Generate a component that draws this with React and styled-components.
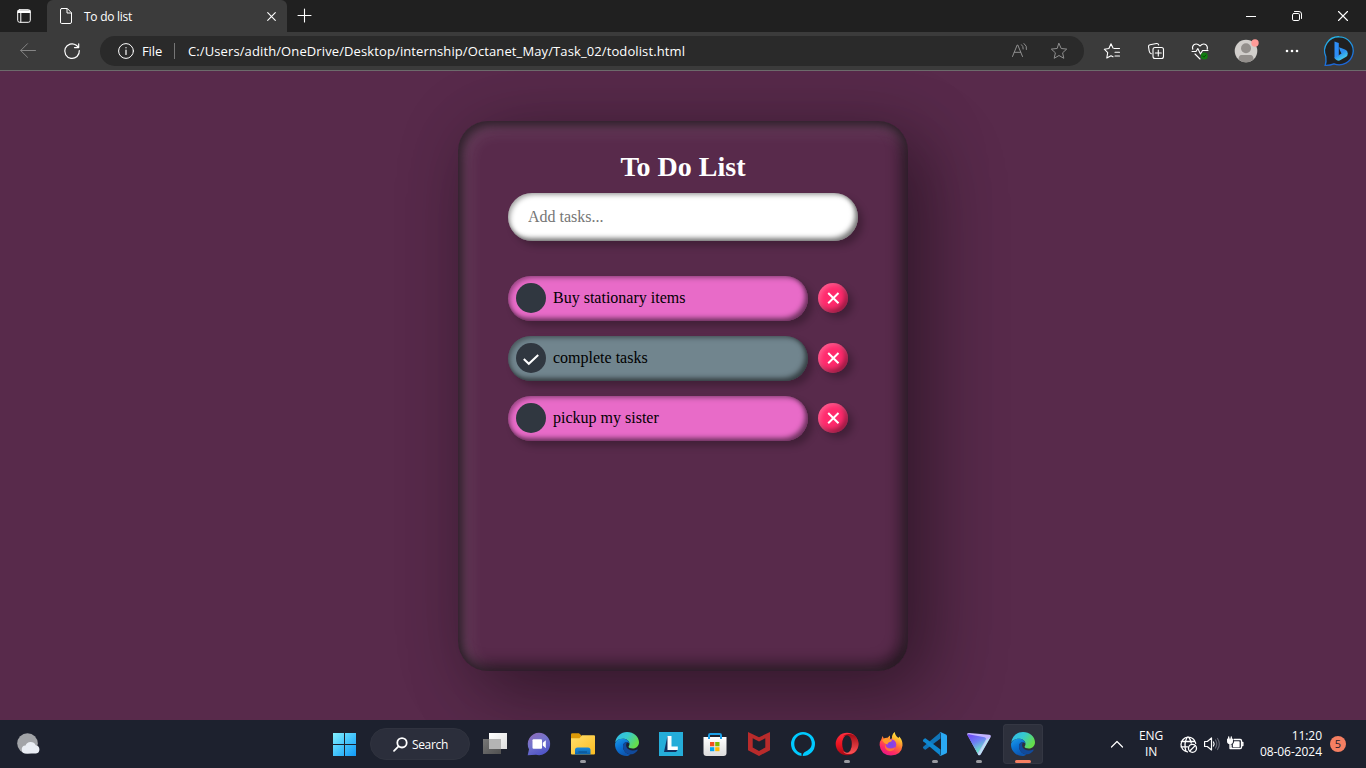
import React, { useId } from "react";
import styled, { createGlobalStyle } from "styled-components";

const GlobalStyle = createGlobalStyle`
  * { box-sizing: border-box; }
  html, body { margin: 0; padding: 0; background: #582a4b; overflow: hidden; }
  button, input { font: inherit; border: 0; padding: 0; background: none; color: inherit; }
  svg { display: block; flex: none; overflow: visible; }
  h1, ul { margin: 0; padding: 0; list-style: none; }
`;

const ui = `"Open Sans", "Noto Sans", sans-serif`;

const Screen = styled.div`
  width: 1366px;
  height: 768px;
  display: grid;
  grid-template-rows: 32px 39px 649px 48px;
  overflow: hidden;
  font-family: ${ui};
  color: #fff;
`;

const TabStrip = styled.header`
  display: flex;
  background: #202020;
`;
const Slot = styled.button`
  width: ${(p) => p.$w}px;
  height: 100%;
  display: grid;
  place-items: center;
  flex: none;
`;
const Tab = styled.div`
  width: 240px;
  height: 32px;
  display: flex;
  align-items: center;
  padding: 0 10px 0 12px;
  background: #3b3b3b;
  border-radius: 6px 6px 0 0;
  font-size: 12px;
`;
const TabTitle = styled.span`
  flex: 1;
  padding-left: 11px;
  letter-spacing: -0.27px;
`;
const Spacer = styled.div`
  flex: 1;
`;

const Toolbar = styled.nav`
  display: flex;
  align-items: center;
  background: #3b3b3b;
  border-bottom: 1px solid #6c6a6b;
  padding: 0 11px 0 6px;
`;
const AddressBar = styled.div`
  width: 984px;
  height: 30px;
  margin: 0 6px;
  display: flex;
  align-items: center;
  background: #2a2a2a;
  border-radius: 15px;
  padding: 0 17px 0 18px;
  font-size: 13px;
`;
const Scheme = styled.span`
  width: 33px;
  margin-left: 8px;
  border-right: 1px solid #767676;
  line-height: 16px;
  letter-spacing: -0.1px;
`;
const Url = styled.span`
  margin-left: 13px;
  flex: 1;
  white-space: nowrap;
  letter-spacing: 0.11px;
`;
const AddressIcons = styled.span`
  display: flex;
  gap: 22px;
`;

const Page = styled.main`
  background: #582a4b;
  display: flex;
  justify-content: center;
  align-items: flex-start;
  padding-top: 50px;
  overflow: hidden;
  font-family: "Liberation Serif", serif;
`;
const Card = styled.section`
  width: 450px;
  height: 550px;
  padding: 30px 50px;
  border-radius: 30px;
  background: #582a4b;
  box-shadow: 25px 25px 75px rgba(0, 0, 0, 0.25),
    10px 10px 70px rgba(0, 0, 0, 0.25),
    inset 5px 5px 10px rgba(0, 0, 0, 0.5),
    inset 5px 5px 20px rgba(255, 255, 255, 0.2),
    inset -5px -5px 15px rgba(0, 0, 0, 0.75);
`;
const Title = styled.h1`
  font-size: 28px;
  line-height: 32px;
  text-align: center;
  margin-bottom: 10px;
`;
const TaskInput = styled.input`
  display: block;
  width: 350px;
  height: 48px;
  padding: 0 20px;
  border-radius: 24px;
  background: #fff;
  font-size: 16px;
  color: #000;
  outline: none;
  box-shadow: 5px 5px 7px rgba(0, 0, 0, 0.25),
    inset 2px 2px 5px rgba(0, 0, 0, 0.35),
    inset -3px -3px 5px rgba(0, 0, 0, 0.5);
  &::placeholder { color: #757575; }
`;
const TaskList = styled.ul`
  margin-top: 35px;
  display: grid;
  gap: 15px;
`;
const TaskRow = styled.li`
  display: flex;
  align-items: center;
  gap: 10px;
`;
const TaskPill = styled.div`
  width: 300px;
  height: 45px;
  display: flex;
  align-items: center;
  gap: 7px;
  padding: 0 8px 1px;
  border-radius: 22.5px;
  background: ${(p) => (p.$done ? "#71858e" : "#e86bc8")};
  color: #000;
  font-size: 16px;
  box-shadow: 5px 5px 7px rgba(0, 0, 0, 0.25),
    inset 2px 2px 5px rgba(0, 0, 0, 0.35),
    inset -3px -3px 5px rgba(0, 0, 0, 0.5);
`;
const Check = styled.span`
  width: 30px;
  height: 30px;
  display: grid;
  place-items: center;
  border-radius: 50%;
  background: #303740;
`;
const Delete = styled.button`
  width: 30px;
  height: 30px;
  margin-top: -1px;
  display: grid;
  place-items: center;
  border-radius: 50%;
  background: #ff2a6d;
  box-shadow: 5px 5px 7px rgba(0, 0, 0, 0.25),
    inset 2px 2px 5px rgba(255, 255, 255, 0.25),
    inset -3px -3px 5px rgba(0, 0, 0, 0.4);
`;

const Taskbar = styled.footer`
  display: grid;
  grid-template-columns: 322px 723px 321px;
  background: #1d212e;
`;
const Weather = styled.div`
  display: flex;
  align-items: center;
  padding-left: 16px;
`;
const Apps = styled.div`
  display: flex;
  align-items: center;
`;
const Search = styled.div`
  width: 100px;
  height: 32px;
  margin: 0 3px 0 4px;
  padding-left: 22px;
  display: flex;
  align-items: center;
  gap: 4px;
  border-radius: 16px;
  background: #2b2e3b;
  border: 1px solid #30333f;
  font-size: 12px;
  letter-spacing: -0.35px;
`;
const AppSlot = styled.div`
  width: 44px;
  height: 48px;
  display: grid;
  place-items: center;
`;
const AppTile = styled.div`
  width: 40px;
  height: 40px;
  display: flex;
  flex-direction: column;
  align-items: center;
  padding-top: 8px;
  border-radius: 4px;
  background: ${(p) => (p.$active ? "#2d303c" : "transparent")};
  box-shadow: ${(p) => (p.$active ? "inset 0 0 0 1px #343743" : "none")};
`;
const Indicator = styled.i`
  margin-top: 4px;
  width: ${(p) => (p.$active ? 16 : 6)}px;
  height: 3px;
  border-radius: 1.5px;
  background: ${(p) => (p.$active ? "#f57f62" : "#9a9ba1")};
`;
const Tray = styled.div`
  display: flex;
  align-items: center;
  padding-left: 65px;
  font-size: 12px;
  line-height: 16px;
`;
const Language = styled.div`
  width: 30px;
  margin-left: 12px;
  text-align: center;
  letter-spacing: -0.2px;
`;
const TrayIcons = styled.div`
  display: flex;
  gap: 6px;
  margin-left: 14px;
`;
const Clock = styled.div`
  width: 76px;
  margin-left: 2px;
  text-align: right;
  white-space: nowrap;
  letter-spacing: -0.05px;
`;
const Badge = styled.div`
  width: 16px;
  height: 16px;
  margin-left: 8px;
  border-radius: 50%;
  background: #f57f62;
  color: #1d212e;
  font-size: 11px;
  text-align: center;
`;

/* Thin outline icon drawn in its own pixel grid. */
const Line = ({ w = 16, h = w, c = "#fff", sw = 1, children }) => (
  <svg width={w} height={h} viewBox={`0 0 ${w} ${h}`} fill="none" stroke={c} strokeWidth={sw} strokeLinecap="round" strokeLinejoin="round">
    {children}
  </svg>
);
const Art = ({ children }) => (
  <svg width="24" height="24" viewBox="0 0 24 24">{children}</svg>
);
const Grad = ({ id, stops, x1 = 0, y1 = 0, x2 = 1, y2 = 1 }) => (
  <linearGradient id={id} x1={x1} y1={y1} x2={x2} y2={y2}>
    {stops.map((s, i) => <stop key={i} offset={i / (stops.length - 1)} stopColor={s} />)}
  </linearGradient>
);

const Star = "M8 .5 10.2 5.500 15.700 6.100 11.600 9.800 12.800 15.300 8 12.500 3.200 15.300 4.400 9.800 .3 6.100 5.800 5.500Z";

const EdgeIcon = () => {
  const k = useId();
  return (
    <Art>
      <defs>
        <Grad id={k + "a"} stops={["#2fb8ed", "#36c9cf", "#65dd4b"]} y2={0.5} />
        <Grad id={k + "b"} stops={["#1d9ce8", "#0a73d4", "#0d55ae"]} x2={0.5} />
      </defs>
      <path fill={`url(#${k}a)`} d="M.2 10.5C1 4.5 6 0 12 0c6.6 0 12 4.6 12 10.2 0 3.7-2.7 6.3-6.2 6.3-2.6 0-4.2-.8-4.2-1.7 0-.6.9-1 .9-2.8C14.500 9 11.500 6.800 8 6.800c-3.600 0-6.500 1.500-7.800 3.700Z" />
      <path fill={`url(#${k}b)`} d="M.1 11.500C1 8.800 3.700 6.800 7.600 6.800c3.500 0 6.300 1.700 6.800 4.600-.9-1-2-1.400-3.200-1.200-2.300.4-3.400 2.300-3.200 4.700.3 4 3.700 7.300 7.600 7.600C14.500 23.400 13.200 24 11.500 24 5 24-.6 18.500.1 11.500Z" />
      <path fill="#114a9b" d="M11.200 10.200c-2.300.4-3.400 2.300-3.200 4.700.4 5.200 5.500 8.600 10.100 7 2-.8 3.800-2.500 4.600-4 .2-.4-.1-.6-.5-.4-3.800 2-9.500 1-10.700-2.500-.7-2-.4-3.600.9-4.800Z" />
    </Art>
  );
};

const StartIcon = () => {
  const k = useId();
  return (
    <svg width="23" height="23" viewBox="0 0 23 23">
      <defs><linearGradient id={k} gradientUnits="userSpaceOnUse" x1="0" y1="0" x2="23" y2="23"><stop stopColor="#83f1ff" /><stop offset=".55" stopColor="#3fc0fb" /><stop offset="1" stopColor="#1198f5" /></linearGradient></defs>
      <path fill={`url(#${k})`} d="M0 0h11v11H0zM12 0h11v11H12zM0 12h11v11H0zM12 12h11v11H12z" />
    </svg>
  );
};
const TaskViewIcon = () => {
  const k = useId();
  return (
    <Art>
      <defs><Grad id={k} stops={["#ffffff", "#dedede"]} /><Grad id={k + "g"} stops={["#777", "#505050"]} /></defs>
      <path fill={`url(#${k}g)`} d="M0 7h18v15H0z" />
      <path fill={`url(#${k})`} d="M6 1h18v16H6z" />
      <path fill="#b4b4b4" d="M6 7h12v10H6z" />
    </Art>
  );
};
const ChatIcon = () => {
  const k = useId();
  return (
    <Art>
      <defs><Grad id={k} stops={["#9269b5", "#7474cc", "#5156c8"]} x2={0.5} /></defs>
      <path fill={`url(#${k})`} d="M12 .8a11.200 11.200 0 1 1-3 22L.7 23.200 2 17.200A11.200 11.200 0 0 1 12 .8Z" />
      <rect x="5.500" y="7.200" width="9.500" height="9.500" rx="1" fill="#fff" />
      <path fill="#fff" d="m15.800 10.800 3-2.600v8l-3-2.600Z" />
    </Art>
  );
};
const ExplorerIcon = () => {
  const k = useId();
  return (
    <Art>
      <defs><Grad id={k} stops={["#ffdf6d", "#fcbc20"]} /><Grad id={k + "b"} stops={["#1a8ada", "#0b63ae"]} x2={0} /></defs>
      <path fill="#dd9a08" d="M0 2.500Q0 1.200 1.300 1.200H8L10.500 3.500V7H0Z" />
      <path fill={`url(#${k})`} d="M0 6.200h8.500L11 3.300h12q1 0 1 1v17.200q0 1-1 1H1q-1 0-1-1Z" />
      <path fill={`url(#${k}b)`} d="M4 22.500V18q0-2.500 2.500-2.500h10.500q2.500 0 2.500 2.500v4.500Z" />
      <path fill="#084b86" d="M7.500 19.500h8.500v1H7.500z" />
    </Art>
  );
};
const LIcon = () => (
  <Art>
    <path fill="#25add9" d="M0 0h24v24H0z" />
    <path fill="#12305f" d="M8.500 4 5 20h12l2-2.500-8-2Z" />
    <path fill="#fff" d="M8.500 4h4v10.500h6.300v3.500H8.500Z" />
  </Art>
);
const StoreIcon = () => {
  const k = useId();
  return (
    <Art>
      <defs><Grad id={k} stops={["#fff", "#dcdcdc"]} x2={0} /></defs>
      <path fill={`url(#${k})`} d="M.5 5h23v16q0 3-3 3h-17q-3 0-3-3Z" />
      <path d="M6 7V3.300Q6 2 7.300 2h9.400q1.300 0 1.300 1.300V7" fill="none" stroke="#1b9fe8" strokeWidth="2" />
      <path fill="#f25022" d="M7 10h4.300v4.300H7z" /><path fill="#7fba00" d="M12.200 10h4.300v4.300h-4.300z" />
      <path fill="#00a4ef" d="M7 15.200h4.300v4H7z" /><path fill="#ffb900" d="M12.200 15.200h4.300v4h-4.300z" />
    </Art>
  );
};
const McAfeeIcon = () => (
  <Art>
    <path fill="#b92b2b" d="m1 0 11 5.300L23 0v18.200L12 24 1 18.200Z" />
    <path fill="#1d212e" d="m5.700 6.300 6.300 3.300 6.300-3.300v9.200L12 19l-6.300-3.500Z" />
  </Art>
);
const AlexaIcon = () => (
  <Art>
    <path fill="#00caff" fillRule="evenodd" d="M12 0a12 12 0 1 1 0 24A12 12 0 0 1 12 0Zm0 2.600c-5 0-8.700 4-8.700 9.200 0 4.400 2.500 8.400 7.200 9.500V24h1.200c.1-2.200.8-3 2.600-4.200 3.800-1.800 6.400-4.200 6.400-8.200 0-5.200-3.800-9-8.700-9Z" />
  </Art>
);
const OperaIcon = () => {
  const k = useId();
  return (
    <Art>
      <defs><Grad id={k} stops={["#ff3040", "#ed1421", "#a50814"]} x2={0} /><Grad id={k + "b"} stops={["#a20a13", "#ff5558"]} x2={0} /></defs>
      <circle cx="12" cy="12" r="11.300" fill={`url(#${k})`} />
      <path fill={`url(#${k}b)`} d="M8 4.500C10 1.700 15 1 19 3.200c6 4.500 6 13 0 17.600-4 2.200-9 1.500-11-1.300 5 1.500 9-2 9-7.500S13 3 8 4.500Z" />
      <ellipse cx="12" cy="12" rx="4.800" ry="8.700" fill="#1d212e" />
    </Art>
  );
};
const FirefoxIcon = () => {
  const k = useId();
  return (
    <Art>
      <defs>
        <Grad id={k} stops={["#fff34f", "#ffbd2f", "#ff6c36", "#ff2c63", "#e31587"]} x1={0.8} x2={0.25} />
        <radialGradient id={k + "p"}><stop stopColor="#7049ef" /><stop offset="1" stopColor="#a83bd4" /></radialGradient>
      </defs>
      <path fill={`url(#${k})`} d="M3.500 4 4.800 6.500Q6.500 5.500 8.500 5.700L11 3.500 11 7 13 6.500Q12.500 2.500 15.800 0 16 3.500 19.500 6L20.300 4.500Q23.800 8.500 23.500 13.500 22.500 23.200 12 23.500 1.500 23 .6 13 .7 9 2.500 7Z" />
      <circle cx="12" cy="12.500" r="5.300" fill={`url(#${k}p)`} />
      <path fill="#ff9b29" d="M3 8q4-3 7.500-.5L13 8.200q0 1.500-3 2-1.700.7-1.500 2.300Q5.500 12 3 8Z" />
      <path fill="#ff7138" d="M6 12q1 4.500 5.500 4.500 3 0 4.500-1.500-.5 4-5 4.200Q5 18.500 6 12Z" />
    </Art>
  );
};
const CodeIcon = () => (
  <Art>
    <path fill="#1075b9" d="M17.500.2v6.200L2.800 17.500Q2 18 1.300 17.300L.2 16.200q-.6-.7 0-1.400Z" />
    <path fill="#0f87cf" d="M17.500 23.800v-6.200L2.800 6.500Q2 6 1.300 6.700L.2 7.800q-.6.7 0 1.400Z" />
    <path fill="#2aa8f2" d="M17.500 0 23 2.500q1 .5 1 1.500v16q0 1-1 1.500L17.500 24q-1 .2-1.700-.6 2.200 1 2.200-1.400V2q0-2.400-2.200-1.400.7-.8 1.700-.6Z" />
  </Art>
);
const ProtonIcon = () => {
  const k = useId();
  return (
    <Art>
      <defs><Grad id={k} stops={["#7341f5", "#6d7ff3", "#69edc5"]} x2={0.5} /></defs>
      <path fill="#c2b4ff" d="M0 2Q.2 1 2 1l20.500 1.700q2 .3 1.300 2L14 22q-1 2-2.700 1Z" />
      <path fill={`url(#${k})`} d="M.3 3Q1 1.600 3 2.500l14.500 2.700q2.200.7 1.200 2.600l-8 13.700Z" />
      <path fill="#b7f4ee" d="m23.500 5-10 17.200q-1.300 2-2.600.3l8.400-14.200Z" opacity=".75" />
    </Art>
  );
};

const apps = [
  { name: "taskview", icon: TaskViewIcon },
  { name: "chat", icon: ChatIcon },
  { name: "explorer", icon: ExplorerIcon, open: true },
  { name: "edge", icon: EdgeIcon },
  { name: "l", icon: LIcon },
  { name: "store", icon: StoreIcon },
  { name: "mcafee", icon: McAfeeIcon },
  { name: "alexa", icon: AlexaIcon },
  { name: "opera", icon: OperaIcon, open: true },
  { name: "firefox", icon: FirefoxIcon },
  { name: "code", icon: CodeIcon, open: true },
  { name: "proton", icon: ProtonIcon, open: true },
  { name: "edge-active", icon: EdgeIcon, open: true, active: true },
];

const tasks = [
  { text: "Buy stationary items", done: false },
  { text: "complete tasks", done: true },
  { text: "pickup my sister", done: false },
];

const BingIcon = () => {
  const k = useId();
  return (
    <svg width="32" height="32" viewBox="0 0 32 32">
      <defs><Grad id={k} stops={["#25bce9", "#1c66d8"]} x2={0.3} /><Grad id={k + "b"} stops={["#3299f5", "#2a8df0", "#4bd6e8"]} x2={0.6} /></defs>
      <path fill="#202020" stroke={`url(#${k})`} strokeWidth="1.300" d="M16.500 1.800a14 14 0 1 1-5.500 27Q6.500 30.600 2.200 30.300 3.500 27 2.800 21.500A14 14 0 0 1 16.500 1.800Z" />
      <path fill="#2e8df5" d="m11.500 6.500 4.300 1.600V20.500L11.500 23.500Z" />
      <path fill={`url(#${k}b)`} d="m11.500 22.500 5-2.700 2-1.300-1.500-3-1-3.200 6 2.200q2.800 1.100 2.800 4 0 2.300-2 3.500L17.500 25q-2 1.300-4 0-1.700-1-2-2.500Z" />
    </svg>
  );
};

export default function App() {
  return (
    <Screen>
      <GlobalStyle />
      <TabStrip>
        <Slot $w={47}>
          <Line w={14}>
            <rect x=".7" y=".7" width="12.600" height="12.600" rx="2" />
            <path d="M1 2h12M1 3.200h12" strokeWidth="1.400" /><path d="M3.800 4v9" />
          </Line>
        </Slot>
        <Tab>
          <Line w={14} h={16}>
            <path d="M2.500.5h5.800l4.200 4.300v9.200q0 1.500-1.500 1.500H2.500Q1.500 15.500 1.500 14V2Q1.500.5 2.500.5ZM8 .8V5h4.300" />
          </Line>
          <TabTitle>To do list</TabTitle>
          <Line w={11} sw={1.1}><path d="m1.700 1.700 7.600 7.600M9.300 1.700 1.700 9.300" /></Line>
        </Tab>
        <Slot $w={35}><Line w={14} sw={1.1}><path d="M6.500 0v13M0 6.500h13" /></Line></Slot>
        <Spacer />
        <Slot $w={46}><Line w={10}><path d="M0 5.500h10" strokeLinecap="butt" /></Line></Slot>
        <Slot $w={46}>
          <Line w={10}><rect x=".5" y="2.500" width="7" height="7" rx="1.300" /><path d="M2.500.5H7Q9.500.5 9.500 3v4.500" /></Line>
        </Slot>
        <Slot $w={46}><Line w={10} sw={1.1}><path d="m.5.5 9 9M9.500.5l-9 9" /></Line></Slot>
      </TabStrip>

      <Toolbar>
        <Slot $w={44}><Line w={16} c="#858585"><path d="M15.500 7.500H.7M7.500.7.7 7.500l6.800 6.800" /></Line></Slot>
        <Slot $w={44}><Line w={16} sw={1.2}><path d="M15.300 7.500A7.300 7.300 0 1 1 12.300 2.200L14.500 4.300M14.700.8v3.800H10.500" /></Line></Slot>
        <AddressBar>
          <Line w={16}><circle cx="8" cy="8" r="7.400" /><path d="M8 7v4.500M8 4.500v.3" strokeWidth="1.200" c="#ccc" /></Line>
          <Scheme>File</Scheme>
          <Url>C:/Users/adith/OneDrive/Desktop/internship/Octanet_May/Task_02/todolist.html</Url>
          <AddressIcons>
            <Line w={18} h={16} c="#8f8f8f"><path d="m1.500 13.500 4.700-11.500h.600l4.700 11.500M3.300 9.300h6.400M10.500 1.700q2 1.500 1.700 4.300M13 .5q3.300 2.300 2.500 6" sw={1.1} /></Line>
            <Line w={16} c="#8f8f8f"><path d={Star} /></Line>
          </AddressIcons>
        </AddressBar>
        <Slot $w={44}>
          <Line w={16} sw={1.1}><path d="M10 5.500h5.500M11 9.300h4.500M11 13h4.500M9 5 7 .8 4.900 5.500.3 6.200l3.400 3.400L2.800 15 7 12.700l2 1.100" /></Line>
        </Slot>
        <Slot $w={44}>
          <Line w={16} sw={1.1}>
            <path d="M3.300 10.800Q1.500 10 1.200 8L.500 3.700Q.3 2 2 1.700L8.500.5q1.700-.2 2.200 1.500" />
            <rect x="5" y="4.500" width="10.500" height="11" rx="2" /><path d="M10.300 7v6M7.300 10h6" />
          </Line>
        </Slot>
        <Slot $w={44}>
          <Line w={18} h={17} sw={1.1}>
            <path d="M1.800 6.300Q.8 3.500 2.800 1.800 6-.2 9 3q3-3.200 6-1.200 2 1.700 1.200 4.500M1 8.500h4l1.800-3 2.700 5.500 2-3.500h5.500M4 11l5 5" />
            <circle cx="13.300" cy="13" r="3.500" fill="#107c10" stroke="none" />
            <path d="m11.700 13 1.200 1.200 2-2.200" stroke="#063d06" strokeWidth=".8" />
          </Line>
        </Slot>
        <Slot $w={48}>
          <svg width="24" height="24" viewBox="0 0 24 24">
            <circle cx="12" cy="12" r="11.300" fill="#d1cecb" />
            <circle cx="12" cy="9.300" r="5" fill="#938f8c" />
            <path fill="#938f8c" d="M4.500 20.400q0-4.500 3-4.500h9q3 0 3 4.500-3.500 3-7.500 3t-7.500-3Z" />
            <circle cx="21" cy="4" r="3.700" fill="#ff9b98" />
          </svg>
        </Slot>
        <Slot $w={44}>
          <svg width="14" height="4" viewBox="0 0 14 4" fill="#fff"><circle cx="2" cy="2" r="1.300" /><circle cx="7" cy="2" r="1.300" /><circle cx="12" cy="2" r="1.300" /></svg>
        </Slot>
        <Spacer />
        <BingIcon />
      </Toolbar>

      <Page>
        <Card>
          <Title>To Do List</Title>
          <TaskInput placeholder="Add tasks..." />
          <TaskList>
            {tasks.map((t) => (
              <TaskRow key={t.text}>
                <TaskPill $done={t.done}>
                  <Check>
                    {t.done && <Line w={16} sw={2}><path d="m.8 9 5 4.800L15.200 5" strokeLinecap="butt" strokeLinejoin="miter" /></Line>}
                  </Check>
                  {t.text}
                </TaskPill>
                <Delete><Line w={12} sw={2}><path d="m1.200 1 10.300 10.300M11.500 1 1.200 11.300" strokeLinecap="butt" /></Line></Delete>
              </TaskRow>
            ))}
          </TaskList>
        </Card>
      </Page>

      <Taskbar>
        <Weather>
          <svg width="24" height="24" viewBox="0 0 24 24">
            <circle cx="11.500" cy="11.500" r="10.300" fill="#a2a4a8" />
            <path fill="#e9edf4" d="M10 21.500a4 4 0 0 1-.5-8 5.500 5.500 0 0 1 10.200-.3A4.200 4.200 0 0 1 20 21.500Z" />
          </svg>
        </Weather>
        <Apps>
          <AppSlot><StartIcon /></AppSlot>
          <Search>
            <Line w={15} sw={1.800}><circle cx="9" cy="5.800" r="4.700" /><path d="M5.500 9.300 1 13.800" /></Line>
            Search
          </Search>
          {apps.map(({ name, icon: Icon, open, active }) => (
            <AppSlot key={name}>
              <AppTile $active={active}>
                <Icon />
                {open && <Indicator $active={active} />}
              </AppTile>
            </AppSlot>
          ))}
        </Apps>
        <Tray>
          <Line w={14} h={8} sw={1.2}><path d="m1.500 7 5.500-5.500L12.500 7" /></Line>
          <Language>ENG IN</Language>
          <TrayIcons>
            <Line w={18} h={17} sw={1.3}>
              <path d="M7.500 15.900A7.400 7.400 0 1 1 15.700 7.300M6 15.300Q3.500 8 7 1.500q1-1 2 0Q10.800 4 11.200 7M1.300 5.500h13.400M1 10.800h6.500" />
              <circle cx="12.500" cy="12.300" r="4" /><path d="m9.800 15 5.400-5.400" />
            </Line>
            <Line w={16} h={16} sw={1.2}>
              <path d="M.6 5.500h2.700L7.500 2v12L3.300 10.500H.6ZM9.500 6q1.300 2 0 4" />
              <path d="M11.500 4q2.600 4 0 8M13.500 2.500q3.700 5.500 0 11" stroke="#646672" />
            </Line>
            <Line w={18} h={16} sw={1.3}>
              <path d="M8 3.500h6.200q1.300 0 1.300 1.300v6.400q0 1.300-1.300 1.300H6.500Q5 12.500 5 11V9M15.900 6.500h1v3h-1" />
              <path d="M8.500 6h4.500v4.500H7.500V8.300L8.500 7Z" fill="#fff" />
              <path d="M1.700 3.200h4.600v2.300Q6.300 7.500 4 7.500T1.700 5.500Z" fill="#fff" /><path d="M2.700 1v2M5.300 1v2M4 7.500v5h2" />
            </Line>
          </TrayIcons>
          <Clock>11:20<br />08-06-2024</Clock>
          <Badge>5</Badge>
        </Tray>
      </Taskbar>
    </Screen>
  );
}
